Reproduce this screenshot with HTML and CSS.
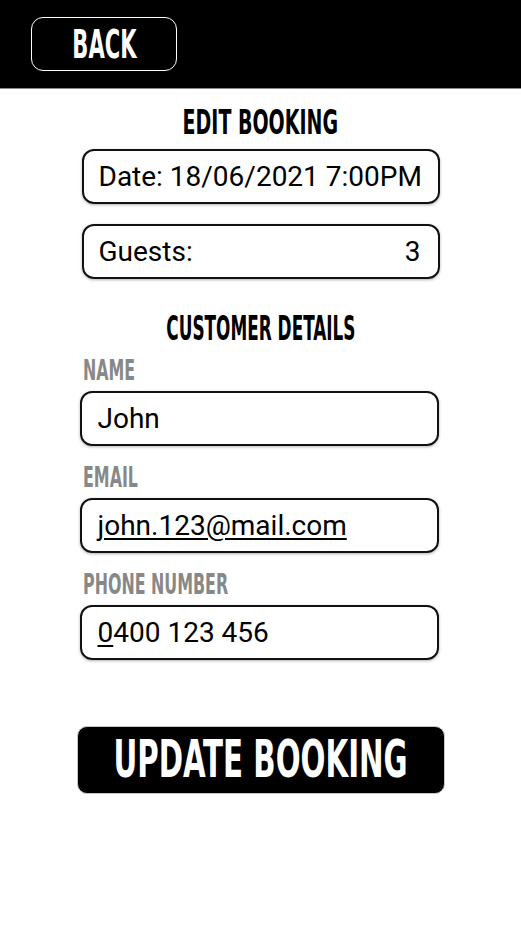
FILE: index.html
```html
<!DOCTYPE html>
<html lang="en">
<head>
  <meta charset="UTF-8">
  <title>Edit Booking</title>
  <link rel="stylesheet" href="styles.css">
</head>
<body>

  <header class="top-bar">
    <button class="back-btn"><span class="cond narrow">BACK</span></button>
  </header>

  <main class="page">
    <h1 class="title"><span class="cond">EDIT BOOKING</span></h1>

    <div class="info-box">Date: 18/06/2021 7:00PM</div>
    <div class="info-box guests">
      <span>Guests:</span>
      <span>3</span>
    </div>

    <h2 class="subtitle"><span class="cond narrow">CUSTOMER DETAILS</span></h2>

    <div class="form">
      <label class="field-label"><span class="cond">NAME</span></label>
      <div class="field">John</div>

      <label class="field-label"><span class="cond">EMAIL</span></label>
      <div class="field"><u>john.123@mail.com</u></div>

      <label class="field-label"><span class="cond">PHONE NUMBER</span></label>
      <div class="field"><u>0</u>400 123 456</div>
    </div>

    <button class="update-btn"><span class="cond">UPDATE BOOKING</span></button>
  </main>

</body>
</html>
```

FILE: styles.css
```css
body {
  margin: 0;
  background: #fff;
  font-family: Roboto, "Liberation Sans", sans-serif;
  color: #000;
}

/* condensed display font, squeezed to look like the original */
.cond {
  display: inline-block;
  font-family: "Liberation Sans Narrow", "DejaVu Sans Condensed", sans-serif;
  font-weight: bold;
  transform: scaleX(0.63);
  white-space: nowrap;
}

.cond.narrow {
  transform: scaleX(0.56);
}

.top-bar {
  height: 89px;
  background: #000;
  border-bottom: 1px solid #8a8a8a;
  padding: 17px 0 0 31px;
  box-sizing: border-box;
}

.back-btn {
  width: 146px;
  height: 54px;
  background: #000;
  color: #fff;
  border: 1.5px solid #fff;
  border-radius: 12px;
  font-size: 39px;
  line-height: 1;
  padding: 0;
  display: flex;
  align-items: center;
  justify-content: center;
}

.back-btn .cond {
  transform: scaleX(0.6);
}

.page {
  display: flex;
  flex-direction: column;
  align-items: center;
}

.title,
.subtitle {
  margin: 14px 0 6px;
  font-size: 33.5px;
  line-height: 40px;
  font-weight: normal;
  text-align: center;
}

.subtitle {
  margin: 10px 0 0;
}

.info-box {
  width: 358px;
  height: 55px;
  box-sizing: border-box;
  border: 2px solid #111;
  border-radius: 12px;
  box-shadow: 0 1px 3px rgba(0,0,0,0.3);
  padding: 0 17px 0 15px;
  display: flex;
  align-items: center;
  font-size: 28px;
  white-space: nowrap;
  margin-bottom: 20px;
}

.info-box.guests {
  justify-content: space-between;
}

.form {
  width: 359px;
  margin-right: 3px;
  display: flex;
  flex-direction: column;
}

.field-label {
  color: #888;
  font-size: 28px;
  line-height: 32px;
  margin: 6px 0 4px 3px;
}

.field-label .cond {
  transform-origin: left center;
}

.field {
  height: 55px;
  box-sizing: border-box;
  border: 2px solid #111;
  border-radius: 12px;
  box-shadow: 0 1px 3px rgba(0,0,0,0.3);
  padding: 0 15px 0 16px;
  display: flex;
  align-items: center;
  font-size: 28px;
  white-space: nowrap;
  margin-bottom: 10px;
}

.field u {
  text-decoration-thickness: 2px;
  text-underline-offset: 3px;
}

.update-btn {
  margin-top: 56px;
  width: 368px;
  height: 68px;
  background: #000;
  color: #fff;
  border: 1px solid #c8c8c8;
  border-radius: 10px;
  font-size: 51.7px;
  line-height: 1;
  padding: 0;
  display: flex;
  align-items: center;
  justify-content: center;
}
```
